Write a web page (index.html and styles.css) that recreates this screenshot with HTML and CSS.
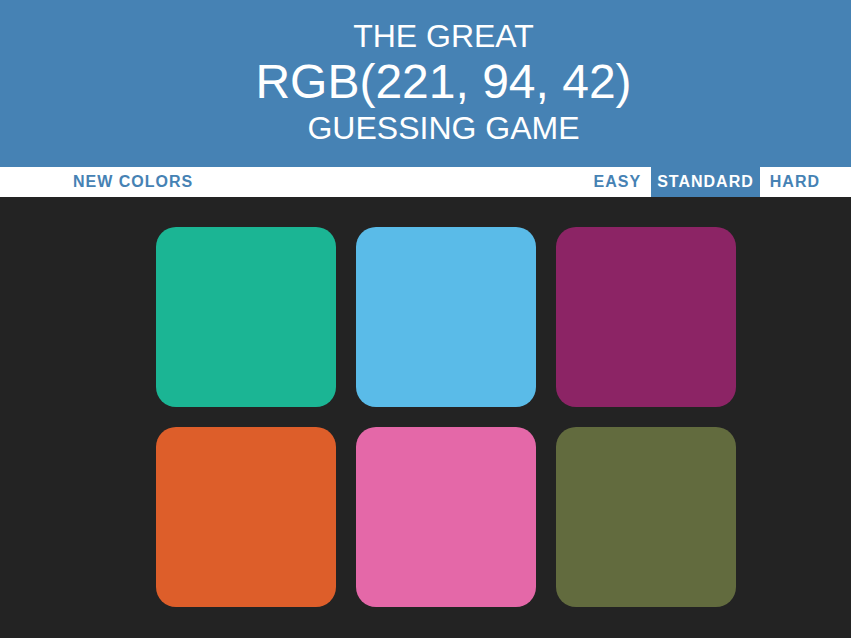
FILE: index.html
```html
<!DOCTYPE html>
<html lang="en">
<head>
<meta charset="utf-8">
<title>Color Game</title>
<link rel="stylesheet" href="styles.css">
</head>
<body>
<h1 class="title">
  <span class="title-small">The Great</span>
  <span class="title-big">RGB(221, 94, 42)</span>
  <span class="title-last">Guessing Game</span>
</h1>
<div class="stripe">
  <button class="btn">New Colors</button>
  <span class="modes"><button class="btn">Easy</button> <button class="btn selected">Standard</button> <button class="btn">Hard</button></span>
</div>
<div class="board">
  <div class="square sq-teal"></div>
  <div class="square sq-sky"></div>
  <div class="square sq-plum"></div>
  <div class="square sq-orange"></div>
  <div class="square sq-pink"></div>
  <div class="square sq-olive"></div>
</div>
</body>
</html>
```
FILE: styles.css
```css
html, body {
  margin: 0;
  padding: 0;
}
body {
  background: #232323;
  font-family: "Liberation Sans", Arial, sans-serif;
  min-height: 638px;
}
.title {
  margin: 0;
  padding: 21px 0 22px 36px;
  background: #4682b4;
  color: #ffffff;
  text-align: center;
  font-weight: normal;
  text-transform: uppercase;
}
.title-small, .title-last {
  display: block;
  font-size: 32px;
  line-height: 31px;
}
.title-last {
  line-height: 33px;
}
.title-big {
  display: block;
  font-size: 48px;
  line-height: 60px;
}
.stripe {
  height: 30px;
  background: #ffffff;
  display: flex;
  justify-content: space-between;
  align-items: stretch;
  padding: 0 25px 0 67px;
}
.modes {
  display: flex;
  gap: 4px;
}
.btn {
  border: none;
  background: none;
  margin: 0;
  padding: 0 6px;
  height: 30px;
  font-family: "Liberation Sans", Arial, sans-serif;
  font-size: 16px;
  font-weight: 700;
  letter-spacing: 1px;
  text-transform: uppercase;
  color: #4682b4;
  cursor: pointer;
  outline: none;
}
.btn.selected {
  background: #4682b4;
  color: #ffffff;
}
.board {
  display: grid;
  grid-template-columns: repeat(3, 180px);
  gap: 20px;
  width: 580px;
  margin: 30px 0 0 156px;
}
.square {
  width: 180px;
  height: 180px;
  border-radius: 20px;
}
.sq-teal { background: #1bb594; }
.sq-sky { background: #5abbe8; }
.sq-plum { background: #8c2465; }
.sq-orange { background: #dd5e2a; }
.sq-pink { background: #e468a8; }
.sq-olive { background: #626b3e; }
```
